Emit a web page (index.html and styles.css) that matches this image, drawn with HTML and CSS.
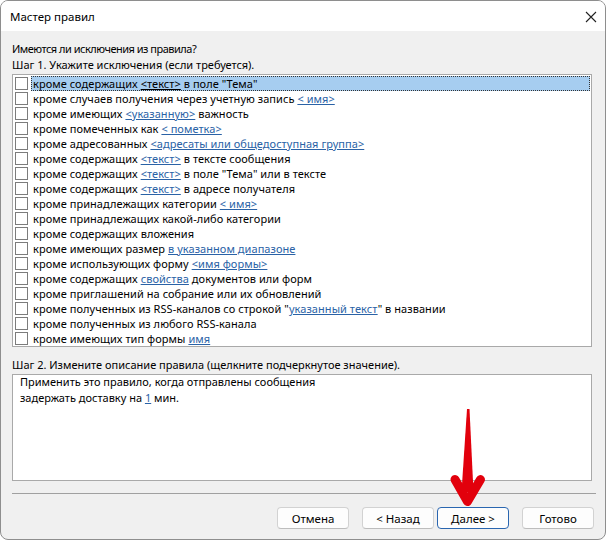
FILE: index.html
```html
<!DOCTYPE html>
<html lang="ru">
<head>
    <meta charset="UTF-8">
    <title>Мастер правил</title>
    <link rel="stylesheet" href="styles.css">
</head>
<body>
    <div class="window">
        <div class="titlebar">
            <span class="title">Мастер правил</span>
            <svg class="close" width="12" height="12" viewBox="0 0 12 12">
                <path d="M1 1 L11 11 M11 1 L1 11" stroke="#222" stroke-width="1.1" fill="none"/>
            </svg>
        </div>
        <div class="content">
            <p class="caption first">Имеются ли исключения из правила?</p>
            <p class="caption">Шаг 1. Укажите исключения (если требуется).</p>
            <div class="list">
                <div class="row selected"><span class="check"></span><span class="label">кроме содержащих <a>&lt;текст&gt;</a> в поле "Тема"</span></div>
                <div class="row"><span class="check"></span><span class="label">кроме случаев получения через учетную запись <a>&lt; имя&gt;</a></span></div>
                <div class="row"><span class="check"></span><span class="label">кроме имеющих <a>&lt;указанную&gt;</a> важность</span></div>
                <div class="row"><span class="check"></span><span class="label">кроме помеченных как <a>&lt; пометка&gt;</a></span></div>
                <div class="row"><span class="check"></span><span class="label">кроме адресованных <a>&lt;адресаты или общедоступная группа&gt;</a></span></div>
                <div class="row"><span class="check"></span><span class="label">кроме содержащих <a>&lt;текст&gt;</a> в тексте сообщения</span></div>
                <div class="row"><span class="check"></span><span class="label">кроме содержащих <a>&lt;текст&gt;</a> в поле "Тема" или в тексте</span></div>
                <div class="row"><span class="check"></span><span class="label">кроме содержащих <a>&lt;текст&gt;</a> в адресе получателя</span></div>
                <div class="row"><span class="check"></span><span class="label">кроме принадлежащих категории <a>&lt; имя&gt;</a></span></div>
                <div class="row"><span class="check"></span><span class="label">кроме принадлежащих какой-либо категории</span></div>
                <div class="row"><span class="check"></span><span class="label">кроме содержащих вложения</span></div>
                <div class="row"><span class="check"></span><span class="label">кроме имеющих размер <a>в указанном диапазоне</a></span></div>
                <div class="row"><span class="check"></span><span class="label">кроме использующих форму <a>&lt;имя формы&gt;</a></span></div>
                <div class="row"><span class="check"></span><span class="label">кроме содержащих <a>свойства</a> документов или форм</span></div>
                <div class="row"><span class="check"></span><span class="label">кроме приглашений на собрание или их обновлений</span></div>
                <div class="row"><span class="check"></span><span class="label">кроме полученных из RSS-каналов со строкой "<a>указанный текст</a>" в названии</span></div>
                <div class="row"><span class="check"></span><span class="label">кроме полученных из любого RSS-канала</span></div>
                <div class="row"><span class="check"></span><span class="label">кроме имеющих тип формы <a>имя</a></span></div>
            </div>
            <p class="caption step2">Шаг 2. Измените описание правила (щелкните подчеркнутое значение).</p>
            <div class="description">
                <p>Применить это правило, когда отправлены сообщения</p>
                <p>задержать доставку на <a>1</a> мин.</p>
            </div>
            <div class="separator"></div>
            <div class="buttons">
                <button>Отмена</button>
                <button class="back">&lt; Назад</button>
                <button class="default">Далее &gt;</button>
                <button class="finish">Готово</button>
            </div>
        </div>
        <svg class="arrow" width="50" height="110" viewBox="443 405 50 110">
            <path d="M467 409 L469.5 409 L473.5 492 L461.5 492 Z" fill="#e2000c"/>
            <path d="M455 479.5 L467.5 501.5 L480.5 479.5" stroke="#e2000c" stroke-width="9" stroke-linecap="round" stroke-linejoin="round" fill="none"/>
        </svg>
    </div>
</body>
</html>
```

FILE: styles.css
```css
body {
    margin: 0;
    background: #ffffff;
    font-family: "Noto Sans", "Open Sans", sans-serif;
    font-size: 12px;
    color: #000;
}
.window {
    position: relative;
    width: 604px;
    height: 538px;
    border: 1px solid #8e8e8e;
    border-radius: 8px;
    background: #f0f0f0;
    overflow: hidden;
}
.titlebar {
    height: 30px;
    background: #fff;
    display: flex;
    align-items: center;
    justify-content: space-between;
    padding: 0 8px 0 9px;
}
.title {
    font-size: 11.5px;
}
.close {
    margin-top: 1px;
}
.content {
    padding: 0 11px;
}
.caption {
    margin: 0;
    line-height: 16px;
    font-size: 11px;
}
.caption.first {
    margin-top: 10px;
    letter-spacing: -0.5px;
}
.list {
    margin-top: 1px;
    background: #fff;
    border: 1px solid #a9a9a9;
    padding: 1px 0 0;
    width: 578px;
    font-size: 11px;
    letter-spacing: 0.05px;
}
.row {
    display: flex;
    align-items: center;
    height: 15px;
    line-height: 15px;
}
.check {
    width: 11px;
    height: 11px;
    border: 1px solid #7c7c7c;
    background: #fff;
    margin: 0 3px 0 2px;
    flex: none;
}
.label {
    flex: 1;
    padding-left: 1px;
    margin-right: 1px;
    white-space: nowrap;
    border: 1px solid transparent;
    height: 13px;
    line-height: 13px;
}
.row.selected .label {
    background: #a6cdf0;
    border: 1px dotted #333;
}
a {
    color: #2a62a6;
    text-decoration: underline;
}
.row.selected a {
    color: #000;
}
.step2 {
    margin-top: 10px;
}
.description {
    margin-top: 1px;
    height: 105px;
    background: #fff;
    border: 1px solid #a9a9a9;
    padding: 0 7px;
    width: 564px;
    font-size: 11px;
}
.description p {
    margin: 0;
    line-height: 16px;
}
.description p:first-child {
    margin-top: -1px;
}
.separator {
    margin-top: 12px;
    height: 1px;
    background: #a0a0a0;
    width: 584px;
}
.buttons {
    display: flex;
    justify-content: flex-end;
    padding-top: 13px;
}
button {
    width: 72px;
    height: 22px;
    background: #fdfdfd;
    border: 1px solid #d2d2d2;
    border-bottom-color: #bdbdbd;
    border-radius: 4px;
    font-family: inherit;
    font-size: 11.5px;
    color: #000;
    padding: 0;
}
.back {
    margin-left: 13px;
}
.default {
    margin-left: 3px;
    border: 1px solid #2a66b0;
}
.finish {
    margin-left: 13px;
}
.arrow {
    position: absolute;
    left: 442px;
    top: 404px;
}
```
